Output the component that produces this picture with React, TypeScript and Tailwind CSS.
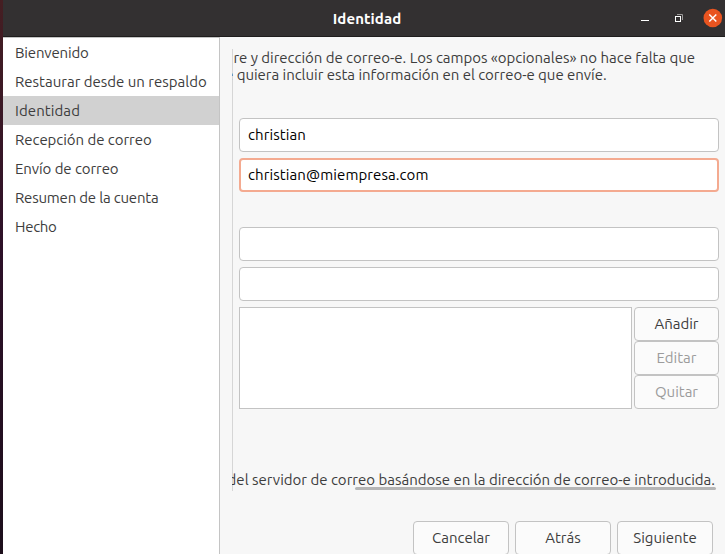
import type { ReactNode } from "react";

const steps = [
  { label: "Bienvenido", tracking: "tracking-[-0.16px]" },
  { label: "Restaurar desde un respaldo", tracking: "tracking-[0px]" },
  { label: "Identidad", tracking: "tracking-[0.08px]", active: true },
  { label: "Recepción de correo", tracking: "tracking-[-0.05px]" },
  { label: "Envío de correo", tracking: "tracking-[-0.08px]" },
  { label: "Resumen de la cuenta", tracking: "tracking-[-0.2px]" },
  { label: "Hecho", tracking: "tracking-[-0.3px]" },
];

function TitleBar() {
  return (
    <header className="flex h-[37px] shrink-0 items-center border-b border-[#1f1d1d] bg-[#333031]">
      <h1 className="ml-[224px] w-[280px] text-center font-bold tracking-[0.1px] text-white">Identidad</h1>
      <svg className="ml-auto" width="95" height="36" viewBox="630 0 95 36" fill="none">
        <path d="M641 20.500h8" stroke="#fff" />
        <path d="M677 14.500h5.500v5.500" stroke="#9b9999" />
        <rect x="675.500" y="16.500" width="5" height="5" stroke="#fff" />
        <circle cx="712.800" cy="18" r="9.300" fill="#e95420" />
        <path d="m709.300 14.500 7 7m0-7-7 7" stroke="#fff" strokeWidth="1.500" />
      </svg>
    </header>
  );
}

function Sidebar() {
  return (
    <nav className="w-[217px] shrink-0 border-t border-r border-[#c4c4c4] bg-white">
      {steps.map((s) => (
        <div
          key={s.label}
          className={`flex h-[29px] items-center whitespace-nowrap pb-px pl-3 ${s.tracking} ${s.active ? "bg-[#d1d1d1]" : ""}`}
        >
          {s.label}
        </div>
      ))}
    </nav>
  );
}

function Field({ value, focused }: { value?: string; focused?: boolean }) {
  return (
    <input
      defaultValue={value}
      className={`block h-[34px] w-full rounded-[4px] bg-white pb-[2px] tracking-[0.09px] text-black outline-none ${
        focused ? "border-2 border-[#f4aa90] px-[7px]" : "border border-[#c3c3c3] px-2"
      }`}
    />
  );
}

function Button({ children, className = "" }: { children: ReactNode; className?: string }) {
  return (
    <button
      className={`flex h-[34px] items-center justify-center rounded-[4px] border border-[#c3c3c3] bg-[#fbfbfb] pb-[2px] ${className}`}
    >
      {children}
    </button>
  );
}

export default function App() {
  return (
    <div className="flex h-[554px] w-[725px] overflow-hidden bg-[#f7f7f7] font-['Ubuntu','Noto_Sans',sans-serif] text-[15px] leading-[17px] text-[#3d3d3d]">
      <div className="w-[3px] shrink-0 bg-linear-to-b from-[#451e22] via-[#2d1028] via-45% to-[#1c0e1b]" />
      <div className="flex min-w-0 flex-1 flex-col">
        <TitleBar />
        <div className="flex min-h-0 flex-1">
          <Sidebar />
          <main className="flex min-w-0 flex-1 flex-col pt-3 pl-3">
            <section className="h-[442px] shrink-0 overflow-hidden pr-[6px] shadow-[inset_1px_0_0_#d6d6d6]">
              <div className="flex flex-col whitespace-nowrap">
                <p className="mr-6 flex justify-end tracking-[-0.03px]">
                  re y dirección de correo-e. Los campos «opcionales» no hace falta que
                </p>
                <p className="-ml-[7px] tracking-[-0.03px]">e quiera incluir esta información en el correo-e que envíe.</p>
              </div>
              <div className="mt-[35px] flex flex-col gap-[6px] pl-[7px]">
                <Field value="christian" />
                <Field value="christian@miempresa.com" focused />
              </div>
              <div className="mt-[35px] flex flex-col gap-[6px] pl-[7px]">
                <Field />
                <Field />
                <div className="flex h-[102px] gap-[2px]">
                  <div className="flex-1 border border-[#c3c3c3] bg-white" />
                  <div className="flex w-[85px] flex-col">
                    <Button>Añadir</Button>
                    <Button className="text-[#9c9c9c]">Editar</Button>
                    <Button className="text-[#9c9c9c]">Quitar</Button>
                  </div>
                </div>
              </div>
              <p className="mt-[62px] mr-[4px] flex justify-end whitespace-nowrap">
                del servidor de correo basándose en la dirección de correo-e introducida.
              </p>
              <div className="-mt-px mr-[3px] ml-auto h-[3px] w-[361px] rounded-full bg-[#b5b5b5]" />
            </section>
            <footer className="mt-[30px] mr-3 flex justify-end gap-[6px]">
              <Button className="w-24">Cancelar</Button>
              <Button className="w-24">Atrás</Button>
              <Button className="w-24">Siguiente</Button>
            </footer>
          </main>
        </div>
      </div>
    </div>
  );
}
